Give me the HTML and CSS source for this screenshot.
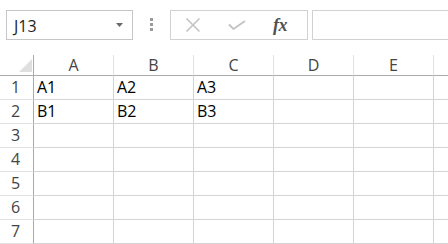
FILE: index.html
```html
<!DOCTYPE html>
<html>
<head>
<meta charset="utf-8">
<link rel="stylesheet" href="styles.css">
</head>
<body>
<div class="toolbar">
  <div class="namebox">
    <span class="name">J13</span>
    <svg class="drop" width="7" height="4" viewBox="0 0 7 4"><path d="M0 0H7L3.5 4Z" fill="#6a6a6a"/></svg>
  </div>
  <div class="grip"><i></i><i></i><i></i></div>
  <div class="buttons">
    <svg class="ico" width="16" height="16" viewBox="0 0 16 16"><path d="M1.5 1.5L14.5 14.5M14.5 1.5L1.5 14.5" stroke="#c3c3c3" stroke-width="1.6" fill="none"/></svg>
    <svg class="ico" width="18" height="10" viewBox="0 0 18 10"><path d="M1 4.5L5.5 9L17 1" stroke="#c3c3c3" stroke-width="1.8" fill="none"/></svg>
    <span class="fx">fx</span>
  </div>
  <div class="formula"></div>
</div>
<div class="sheet">
  <div class="corner"><svg width="13" height="13" viewBox="0 0 13 13"><path d="M13 0V13H0Z" fill="#dfdfdf"/></svg></div>
  <div class="ch">A</div><div class="ch">B</div><div class="ch">C</div><div class="ch">D</div><div class="ch">E</div><div class="ch"></div>

  <div class="rh">1</div><div class="c">A1</div><div class="c">A2</div><div class="c">A3</div><div class="c"></div><div class="c"></div><div class="c"></div>
  <div class="rh">2</div><div class="c">B1</div><div class="c">B2</div><div class="c">B3</div><div class="c"></div><div class="c"></div><div class="c"></div>
  <div class="rh">3</div><div class="c"></div><div class="c"></div><div class="c"></div><div class="c"></div><div class="c"></div><div class="c"></div>
  <div class="rh">4</div><div class="c"></div><div class="c"></div><div class="c"></div><div class="c"></div><div class="c"></div><div class="c"></div>
  <div class="rh">5</div><div class="c"></div><div class="c"></div><div class="c"></div><div class="c"></div><div class="c"></div><div class="c"></div>
  <div class="rh">6</div><div class="c"></div><div class="c"></div><div class="c"></div><div class="c"></div><div class="c"></div><div class="c"></div>
  <div class="rh">7</div><div class="c"></div><div class="c"></div><div class="c"></div><div class="c"></div><div class="c"></div><div class="c"></div>
</div>
</body>
</html>
```
FILE: styles.css
```css
html, body {
  margin: 0;
  padding: 0;
  background: #ffffff;
  overflow: hidden;
  width: 448px;
  height: 244px;
}
body {
  font-family: "Open Sans", "Noto Sans", sans-serif;
}
.toolbar {
  display: flex;
  align-items: flex-start;
  height: 55px;
  padding: 10px 0 0 6px;
  box-sizing: border-box;
}
.namebox {
  width: 127px;
  height: 30px;
  box-sizing: border-box;
  border: 1px solid #c6c6c6;
  display: flex;
  align-items: center;
  justify-content: space-between;
  padding: 0 9px 0 7px;
}
.name {
  font-size: 16px;
  color: #1e1e1e;
  line-height: 1;
  margin-top: 1px;
}
.drop {
  display: block;
}
.grip {
  display: flex;
  flex-direction: column;
  gap: 2px;
  margin: 8px 0 0 17px;
}
.grip i {
  display: block;
  width: 3px;
  height: 3px;
  background: #9a9a9a;
}
.buttons {
  margin-left: 17px;
  width: 138px;
  height: 30px;
  box-sizing: border-box;
  border: 1px solid #d2d2d2;
  display: flex;
  align-items: center;
  padding-left: 14px;
}
.ico {
  display: block;
}
.buttons .ico + .ico {
  margin-left: 27px;
}
.fx {
  margin-left: 27px;
  font-family: "Liberation Serif", "DejaVu Serif", serif;
  font-style: italic;
  font-weight: bold;
  font-size: 18px;
  color: #505050;
  line-height: 1;
  letter-spacing: -0.5px;
}
.formula {
  margin-left: 4px;
  flex: 1;
  height: 30px;
  box-sizing: border-box;
  border: 1px solid #d2d2d2;
  border-right: none;
}
.sheet {
  display: grid;
  grid-template-columns: 34px repeat(5, 80px) 30px;
  grid-template-rows: 21px repeat(7, 24px);
  font-size: 16px;
}
.sheet > div {
  box-sizing: border-box;
  border-right: 1px solid #d4d4d4;
  border-bottom: 1px solid #d4d4d4;
}
.corner {
  display: flex;
  align-items: flex-end;
  justify-content: flex-end;
  padding: 0 1px 3px 0;
  border-bottom-color: #ababab !important;
  border-right-color: #ababab !important;
}
.corner svg {
  display: block;
}
.ch {
  text-align: center;
  color: #444;
  line-height: 20px;
  border-bottom-color: #ababab !important;
  border-right-color: #e2e2e2 !important;
}
.rh {
  text-align: center;
  color: #444;
  line-height: 23px;
  padding-right: 2px;
  border-right-color: #ababab !important;
  border-bottom-color: #e2e2e2 !important;
}
.c {
  color: #000;
  line-height: 23px;
  padding-left: 3px;
}
```
